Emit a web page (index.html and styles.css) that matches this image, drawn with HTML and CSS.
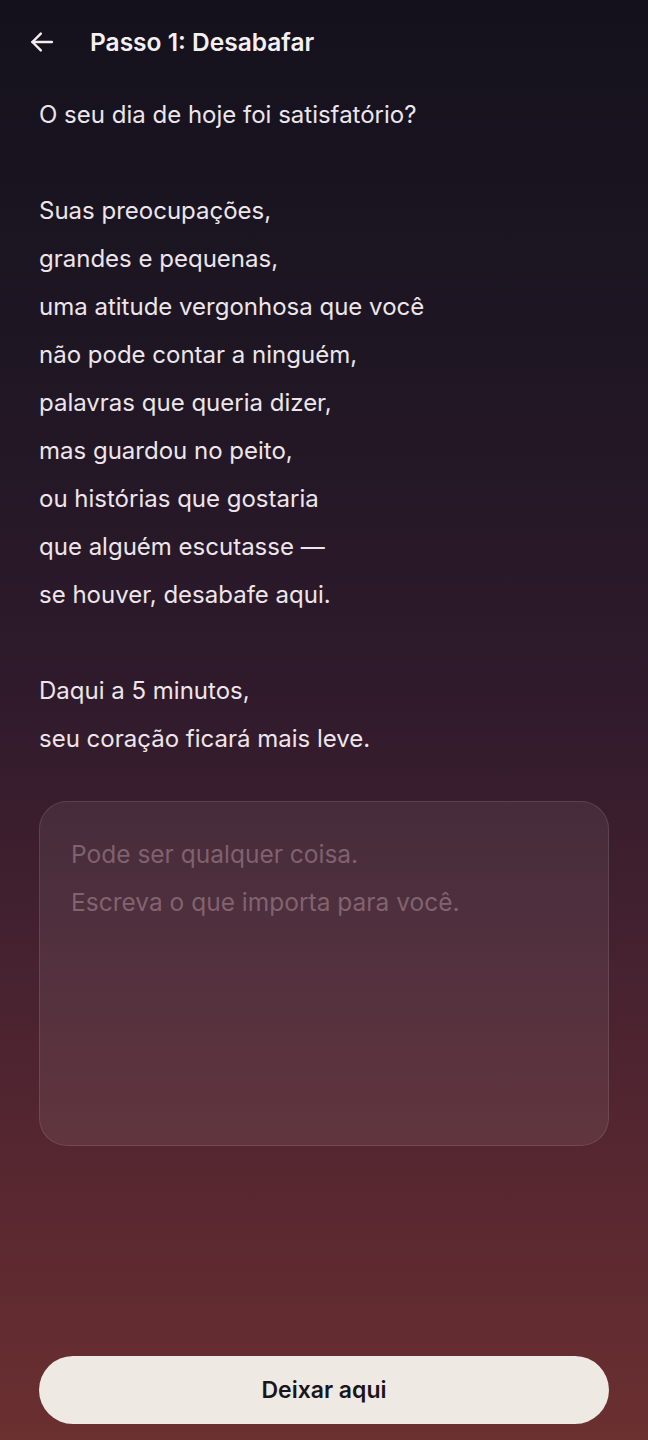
FILE: index.html
```html
<!DOCTYPE html>
<html lang="pt">
<head>
<meta charset="utf-8">
<title>Passo 1: Desabafar</title>
<link rel="stylesheet" href="styles.css">
</head>
<body>
<div class="screen">
  <header class="topbar">
    <button class="back" aria-label="Voltar">
      <svg width="28" height="28" viewBox="0 0 24 24" fill="none" stroke="#f2eef0" stroke-width="2.1" stroke-linecap="round" stroke-linejoin="round"><path d="M20.5 12H3.8"/><path d="M11 4.8L3.8 12l7.2 7.2"/></svg>
    </button>
    <h1 class="title">Passo 1: Desabafar</h1>
  </header>
  <main class="content">
    <p class="intro">O seu dia de hoje foi satisfatório?<br><br>Suas preocupações,<br>grandes e pequenas,<br>uma atitude vergonhosa que você<br>não pode contar a ninguém,<br>palavras que queria dizer,<br>mas guardou no peito,<br>ou histórias que gostaria<br>que alguém escutasse —<br>se houver, desabafe aqui.<br><br>Daqui a 5 minutos,<br>seu coração ficará mais leve.</p>
    <textarea class="entry" placeholder="Pode ser qualquer coisa.&#10;Escreva o que importa para você."></textarea>
  </main>
  <footer class="actions">
    <button class="submit">Deixar aqui</button>
  </footer>
</div>
</body>
</html>
```
FILE: styles.css
```css
* { box-sizing: border-box; }
html, body { margin: 0; padding: 0; }
body {
  font-family: Inter, "Noto Sans", sans-serif;
  color: #f1ecee;
  background: #15111e;
}
.screen {
  width: 648px;
  height: 1440px;
  display: flex;
  flex-direction: column;
  background: linear-gradient(180deg, #14111d 0%, #1f1624 25%, #2f1a2c 48%, #4a2330 70%, #5a2830 84%, #6b3030 100%);
}
.topbar {
  height: 84px;
  display: flex;
  align-items: center;
  padding: 0 0 0 27px;
  gap: 33px;
}
.back {
  width: 30px;
  height: 30px;
  padding: 0;
  border: 0;
  background: none;
  display: flex;
  align-items: center;
  justify-content: center;
}
.title {
  margin: 0;
  font-size: 24.5px;
  font-weight: 600;
  letter-spacing: 0;
  color: #f4f0f2;
}
.content {
  flex: 1;
  padding: 7px 39px 0 39px;
  display: flex;
  flex-direction: column;
}
.intro {
  margin: 0;
  font-size: 24px;
  line-height: 48px;
  letter-spacing: 0;
  color: #ece6ea;
}
.entry {
  margin-top: 38px;
  width: 570px;
  height: 345px;
  resize: none;
  border-radius: 28px;
  border: 1.5px solid rgba(255, 255, 255, 0.1);
  background: rgba(255, 255, 255, 0.07);
  padding: 28px 31px;
  font-family: Inter, "Noto Sans", sans-serif;
  font-size: 24.5px;
  line-height: 48px;
  letter-spacing: 0;
  color: #ece6ea;
  outline: none;
}
.entry::placeholder {
  color: rgba(230, 200, 210, 0.35);
}
.actions {
  padding: 0 39px 16px 39px;
}
.submit {
  width: 570px;
  height: 68px;
  border: 0;
  border-radius: 34px;
  background: #efe9e3;
  font-family: Inter, "Noto Sans", sans-serif;
  font-size: 23px;
  font-weight: 600;
  letter-spacing: 0;
  color: #1b1519;
}
```
